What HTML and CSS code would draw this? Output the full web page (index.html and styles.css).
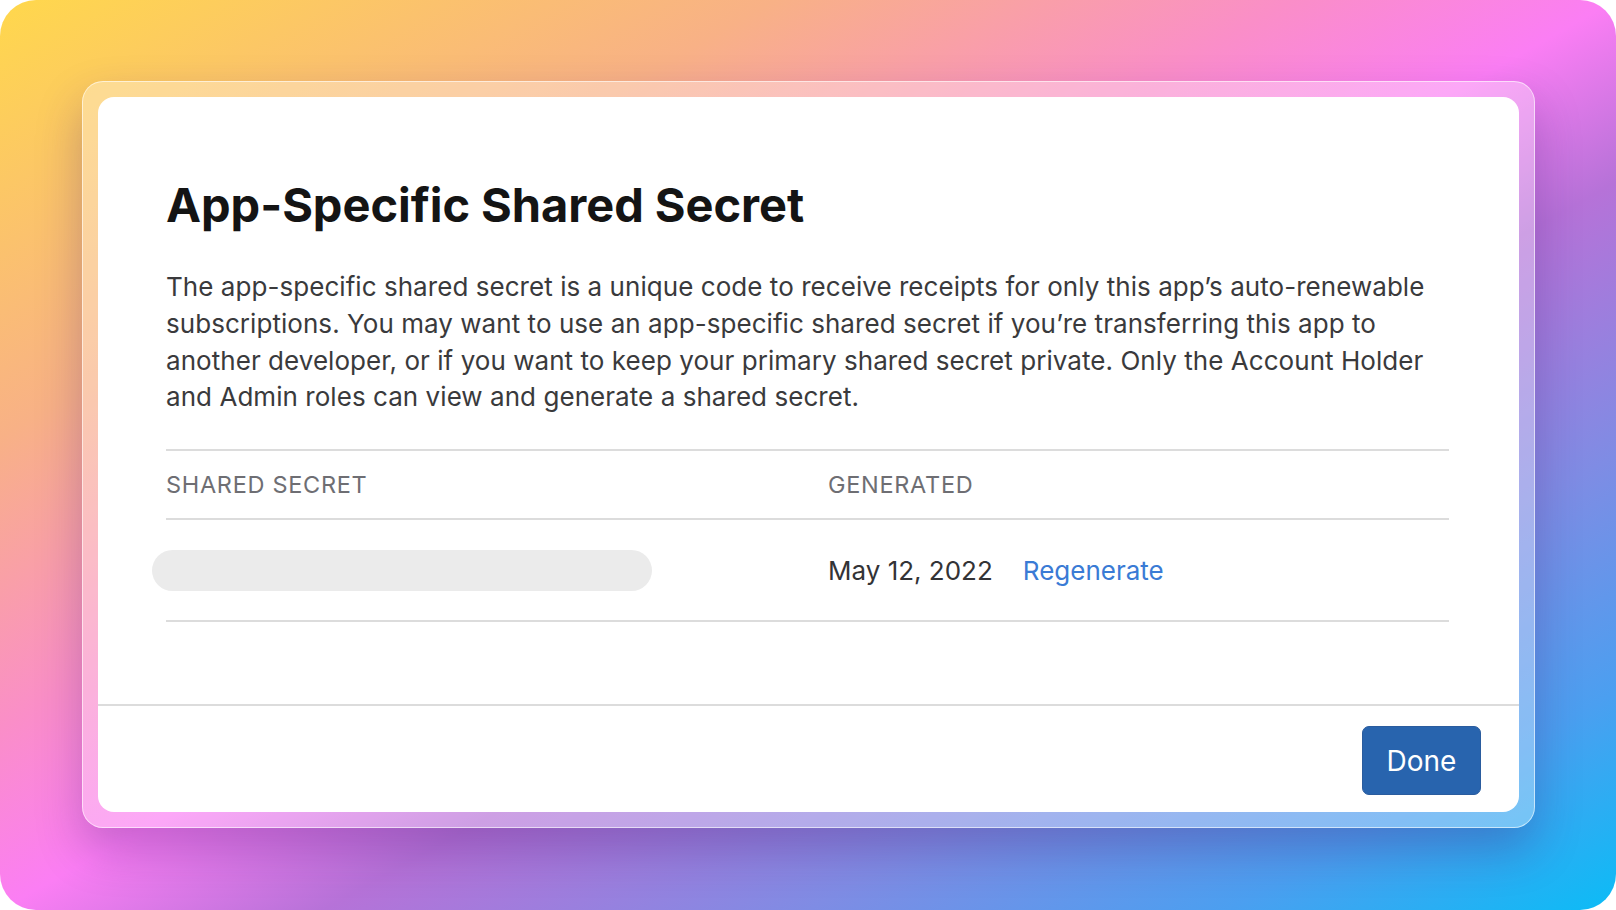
FILE: index.html
```html
<!DOCTYPE html>
<html lang="en">
<head>
<meta charset="utf-8">
<title>App-Specific Shared Secret</title>
<link rel="stylesheet" href="styles.css">
</head>
<body>
<div class="backdrop">
  <div class="frame">
    <div class="dialog">
      <div class="dialog-body">
        <h1 class="title">App-Specific Shared Secret</h1>
        <p class="desc">The app-specific shared secret is a unique code to receive receipts for only this app’s auto-renewable subscriptions. You may want to use an app-specific shared secret if you’re transferring this app to another developer, or if you want to keep your primary shared secret private. Only the Account Holder and Admin roles can view and generate a shared secret.</p>
        <div class="table">
          <div class="row head">
            <div class="cell">SHARED SECRET</div>
            <div class="cell">GENERATED</div>
          </div>
          <div class="row body-row">
            <div class="cell"><div class="secret-pill"></div></div>
            <div class="cell date-cell"><span class="date">May 12, 2022</span><a class="link" href="#">Regenerate</a></div>
          </div>
        </div>
      </div>
      <div class="dialog-footer">
        <button class="btn-done" type="button">Done</button>
      </div>
    </div>
  </div>
</div>
</body>
</html>
```

FILE: styles.css
```css
* { box-sizing: border-box; }
html, body { margin: 0; padding: 0; background: #ffffff; }
body { font-family: Inter, "Noto Sans", "Liberation Sans", sans-serif; }

.backdrop {
  width: 1616px;
  height: 910px;
  border-radius: 36px;
  overflow: hidden;
  padding: 81px 81px 82px 82px;
  display: flex;
  background: linear-gradient(to bottom right, #ffd84c 0%, #f8b186 24%, #fa8ec8 40%, #fb7ef4 50%, #b672d8 60%, #7f8ce4 75%, #4b9ff0 88%, #0bbcf6 100%);
}

.frame {
  flex: 1;
  display: flex;
  padding: 15px;
  border-radius: 21px;
  background: rgba(255, 255, 255, 0.32);
  border: 1.5px solid rgba(255, 255, 255, 0.6);
  box-shadow: 0 22px 46px rgba(60, 20, 110, 0.28);
}

.dialog {
  flex: 1;
  display: flex;
  flex-direction: column;
  background: #ffffff;
  border-radius: 16px;
  overflow: hidden;
}

.dialog-body {
  flex: 1;
  padding: 80px 70px 0 68px;
}

.title {
  margin: 0;
  font-size: 47px;
  line-height: 56px;
  font-weight: 700;
  color: #141414;
  letter-spacing: -0.05px;
}

.desc {
  margin: 36px 0 0;
  font-size: 26px;
  line-height: 36.8px;
  color: #3a3a3c;
  letter-spacing: 0.05px;
}

.table { margin-top: 33px; }

.row {
  display: grid;
  grid-template-columns: 662px 1fr;
  border-top: 2px solid #dcdcdc;
  align-items: center;
}

.row.head { height: 69px; color: #6e6e73; font-size: 23.5px; letter-spacing: 0.7px; }
.row.body-row { height: 104px; border-bottom: 2px solid #dcdcdc; }

.secret-pill {
  margin-left: -14px;
  width: 500px;
  height: 41px;
  border-radius: 21px;
  background: #ebebeb;
}

.date-cell { display: flex; gap: 30px; align-items: center; font-size: 26px; }
.date { color: #333336; }
.link { color: #3a7bd5; text-decoration: none; }

.dialog-footer {
  border-top: 2px solid #dcdcdc;
  height: 108px;
  padding: 20px 38px 0 0;
  display: flex;
  justify-content: flex-end;
}

.btn-done {
  width: 119px;
  height: 69px;
  border-radius: 7px;
  background: #2864ae;
  border: 1px solid #2a5c9e;
  color: #ffffff;
  font-family: Inter, "Noto Sans", sans-serif;
  font-size: 28px;
  font-weight: 400;
  cursor: pointer;
}
```
